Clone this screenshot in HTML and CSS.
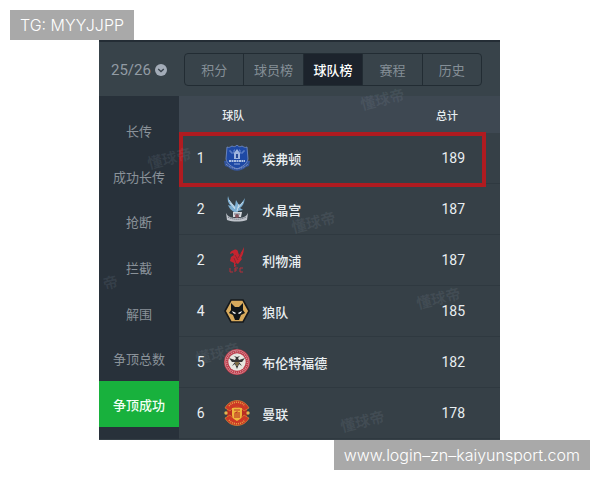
FILE: index.html
```html
<!DOCTYPE html>
<html lang="zh-CN">
<head>
<meta charset="utf-8">
<meta name="viewport" content="width=device-width, initial-scale=1">
<title>球队榜</title>
<link rel="stylesheet" href="styles.css">
</head>
<body>
<header class="banner"><span class="tag">TG: MYYJJPP</span></header>

<main class="panel">
  <div class="toolbar">
    <button class="season" type="button">25/26
      <svg class="season-icon" viewBox="0 0 12 12" aria-hidden="true"><circle cx="6" cy="6" r="6" fill="#a3acb8"/><path d="M3.2 4.9 6 7.5l2.8-2.6" fill="none" stroke="#39434c" stroke-width="1.3"/></svg>
    </button>
    <nav class="tabs">
      <button class="tab" type="button">积分</button>
      <button class="tab" type="button">球员榜</button>
      <button class="tab tab-active" type="button">球队榜</button>
      <button class="tab" type="button">赛程</button>
      <button class="tab" type="button">历史</button>
    </nav>
  </div>

  <div class="content">
    <nav class="sidebar">
      <button class="stat" type="button">长传</button>
      <button class="stat" type="button">成功长传</button>
      <button class="stat" type="button">抢断</button>
      <button class="stat" type="button">拦截</button>
      <button class="stat" type="button">解围</button>
      <button class="stat" type="button">争顶总数</button>
      <button class="stat stat-active" type="button">争顶成功</button>
    </nav>

    <table class="ranking">
      <thead>
        <tr><th class="rank"></th><th class="team" colspan="2">球队</th><th class="total">总计</th></tr>
      </thead>
      <tbody>
        <tr class="highlight">
          <td class="rank">1</td>
          <td class="crest"><svg viewBox="0 0 26 26" aria-hidden="true">
            <path d="M0 16c2-1 4 0 5 3 5 3 11 3 16 0 1-3 3-4 5-3l-1 5-3 1c-5 5-13 5-18 0l-3-1z" fill="#34569f"/>
            <path d="M3 2c2 1 3 0 5-1 2 1 3 1 5-1 2 2 3 2 5 1 2 1 3 2 5 1l1 12c-1 5-6 8-11 10C8 22 3 19 2 14z" fill="#1e49a5" stroke="#7892c9" stroke-width=".8"/>
            <path d="M5 6h2v2h3V5h1M15 5h1v3h3V6h2" fill="none" stroke="#7c9ad5" stroke-width=".8"/>
            <path d="M10 14V8l3-4 3 4v6z" fill="#9fb5de"/><path d="M12 13V9h2v4z" fill="#284b98"/>
            <path d="M5 16h16" stroke="#dce6f5" stroke-width="1.6" stroke-dasharray="2 .5"/>
            <path d="M10 19h6" stroke="#8ca6da"/>
            <path d="M2 19c6 6 16 6 22 0" fill="none" stroke="#8498ca" stroke-dasharray="1 .8"/>
          </svg></td>
          <td class="team">埃弗顿</td><td class="total">189</td>
        </tr>
        <tr>
          <td class="rank">2</td>
          <td class="crest"><svg viewBox="0 0 26 26" aria-hidden="true">
            <path d="M4 0c1 5 4 8 7 10l1-6 3 5c2-1 4-4 6-7-1 5-2 8-5 10l3 2-5 1-1 4-3-3C7 14 5 12 4 9l3 1C4 7 3 4 4 0z" fill="#7caed2"/>
            <path d="m5 4 6 8m-5-5 5 6m8-7-5 6m1-4-2 7" fill="none" stroke="#d8e5ee" stroke-width=".8"/>
            <path d="M9 16h9l-1 5H9z" fill="#d4d8dd"/><path d="M10 18h6" stroke="#6b7582"/>
            <path d="M2 17c2 4 5 5 11 5s9-1 11-5l-1 7c-6 2-14 2-20 0z" fill="#bec3ca"/>
            <path d="M4 21c5 3 13 3 18 0" fill="none" stroke="#575d6b" stroke-dasharray="1 1"/>
            <circle cx="13" cy="20" r="2" fill="#82535d"/>
          </svg></td>
          <td class="team">水晶宫</td><td class="total">187</td>
        </tr>
        <tr>
          <td class="rank">2</td>
          <td class="crest"><svg viewBox="0 0 26 26" aria-hidden="true">
            <path d="M10 3c2-1 4 0 4 2l1 3c2-2 3-4 5-8 0 4-1 8-3 11l1 1-4 5-2-1-1 2 2 1-3 1v-4l-4-2 1-4 3-2-1-2-3 1c0-2 1-3 4-4z" fill="#c6242f"/>
            <path d="m11 8 3 5m-4-2 2 5m5-10-3 5" stroke="#6e2933" stroke-width=".7"/>
            <path d="M6 21v4h3m2 0v-4h3m-3 2h2m6-2h-3v4h3" fill="none" stroke="#b82d38"/>
          </svg></td>
          <td class="team">利物浦</td><td class="total">187</td>
        </tr>
        <tr>
          <td class="rank">4</td>
          <td class="crest"><svg viewBox="0 0 26 26" aria-hidden="true">
            <path d="M7 2h12l6 11-6 11H7L1 13z" fill="#d8aa5c" stroke="#171a1d" stroke-width="1.6"/>
            <path d="m7 5 4 4h4l4-4v7l2 3-4 2-2 5h-4l-2-5-4-2 2-3z" fill="#111619"/>
            <path d="m8 13 4 2-1 1-2-1zm10 0-4 2 1 1 2-1z" fill="#fff"/>
          </svg></td>
          <td class="team">狼队</td><td class="total">185</td>
        </tr>
        <tr>
          <td class="rank">5</td>
          <td class="crest"><svg viewBox="0 0 26 26" aria-hidden="true">
            <circle cx="13" cy="13" r="13" fill="#bb3948"/><circle cx="13" cy="13" r="12" fill="none" stroke="#e1aab0" stroke-width=".6"/>
            <circle cx="13" cy="13" r="10.3" fill="none" stroke="#df9aa1" stroke-width="1.2" stroke-dasharray="1 1"/>
            <circle cx="13" cy="13" r="8.7" fill="#e7e5df"/>
            <path d="m5 9 6 2 1-2-2-2 3 1 3-1-2 2 1 2 6-2-3 4h-3l3 4-3-2-2 5-2-5-3 2 3-4H8z" fill="#343334"/>
            <path d="M11 14h4m-3 2h2" stroke="#c5a356"/>
          </svg></td>
          <td class="team">布伦特福德</td><td class="total">182</td>
        </tr>
        <tr>
          <td class="rank">6</td>
          <td class="crest"><svg viewBox="0 0 26 26" aria-hidden="true">
            <circle cx="13" cy="13" r="10.5" fill="#b92d22"/>
            <path d="M1 8c5-10 19-10 24 0l-5 3c-3-5-11-5-14 0zM1 18c5 10 19 10 24 0l-5-3c-3 5-11 5-14 0z" fill="#cc3826" stroke="#e29836" stroke-width=".6"/>
            <path d="M5 6c4-5 12-5 16 0M5 20c4 5 12 5 16 0" fill="none" stroke="#e5a443" stroke-width="1.5" stroke-dasharray="1 1"/>
            <circle cx="2" cy="13" r="1.7" fill="#e1b64e"/><circle cx="24" cy="13" r="1.7" fill="#e1b64e"/>
            <path d="M8 8h10v7c0 3-2 4-5 6-3-2-5-3-5-6z" fill="#efb63c"/>
            <path d="M10 10h6M11 18v-5l2-1v6m2-6v6" fill="none" stroke="#bc3926" stroke-width="1.2"/>
          </svg></td>
          <td class="team">曼联</td><td class="total">178</td>
        </tr>
      </tbody>
    </table>
  </div>

  <div class="marks" aria-hidden="true">
    <span class="mark mark-a">懂球帝</span>
    <span class="mark mark-b">懂球帝</span>
    <span class="mark mark-c">懂球帝</span>
    <span class="mark mark-d">懂球帝</span>
    <span class="mark mark-e">帝</span>
    <span class="mark mark-f">懂球帝</span>
    <span class="mark mark-g">懂球帝</span>
  </div>
</main>

<footer class="site"><span class="tag">www.login–zn–kaiyunsport.com</span></footer>
</body>
</html>
```
FILE: styles.css
```css
* {
  box-sizing: border-box;
}

body {
  margin: 0;
  background: #fff;
  font-family: Roboto, "Noto Sans CJK SC", sans-serif;
}

button {
  margin: 0;
  padding: 0;
  border: 0;
  background: none;
  color: inherit;
  font: inherit;
}

.banner,
.site {
  display: flex;
  padding: 0 10px;
}

.banner {
  padding-top: 10px;
}

.site {
  justify-content: flex-end;
  padding-bottom: 10px;
}

.tag {
  padding: 0 10px;
  background: #a9a9a9;
  color: #fff;
  font-family: Inter, "Liberation Sans", sans-serif;
  font-size: 16px;
  font-weight: 300;
  line-height: 30px;
}

.panel {
  position: relative;
  margin: 0 100px 0 99px;
  padding-bottom: 1px;
  overflow: hidden;
  border-top: 2px solid #242d35;
  background: #364047;
  color: #e9eef1;
}

.toolbar {
  display: grid;
  grid-template-columns: 73px 1fr;
  align-items: center;
  padding: 11px 18px 10px 12px;
  background: #38434a;
}

.season {
  display: flex;
  align-items: center;
  gap: 4px;
  color: #929ba4;
  font-size: 15px;
}

.season-icon {
  width: 12px;
  height: 12px;
}

.tabs {
  display: flex;
  height: 33px;
  border: 1px solid #222c33;
  border-radius: 4px;
  overflow: hidden;
}

.tab {
  flex: 1;
  color: #858f97;
  font-size: 13px;
}

.tab + .tab {
  border-left: 1px solid #222c33;
}

.tab-active {
  background: #1c232c;
  color: #fff;
  font-weight: 500;
}

.content {
  display: flex;
}

.sidebar {
  display: flex;
  flex-direction: column;
  flex: 0 0 20%;
  padding: 12px 0;
  background: #28313a;
}

.stat {
  flex: 1;
  color: #8a9299;
  font-size: 13px;
}

.stat-active {
  background: #18b13d;
  color: #f1fff4;
  font-weight: 500;
}

.ranking {
  flex: 1;
  border-collapse: separate;
  border-spacing: 0;
}

.ranking th {
  height: 37px;
  padding: 0;
  background: #3e4852;
  font-size: 11px;
  font-weight: 500;
}

.ranking td {
  height: 51px;
  padding: 0;
  border-bottom: 1px solid #2f3940;
  font-size: 14px;
}

.ranking .rank {
  width: 43px;
  text-align: center;
}

.ranking .crest {
  width: 40px;
  padding-left: 2px;
}

.crest svg {
  display: block;
  width: 26px;
  height: 26px;
}

.ranking .team {
  text-align: left;
}

.ranking td.team {
  font-size: 13px;
  font-weight: 500;
}

.ranking .total {
  text-align: right;
}

.ranking th.total {
  padding-right: 42px;
}

.ranking td.total {
  padding-right: 35px;
}

.highlight {
  position: relative;
}

.highlight .rank::after {
  content: "";
  position: absolute;
  inset: -1px 14px -3px 0;
  border: 4px solid #b01b20;
}

.marks {
  position: absolute;
  inset: 0;
  pointer-events: none;
}

.mark {
  position: absolute;
  color: rgba(150, 165, 178, 0.13);
  font-size: 15px;
  font-weight: 700;
  line-height: 20px;
  transform: rotate(-14deg);
}

.mark-a { left: 12%; top: 27%; }
.mark-b { left: 65%; top: 12%; }
.mark-c { left: 48%; top: 43%; }
.mark-d { left: 79%; top: 62%; }
.mark-e { left: 1%; top: 58%; }
.mark-f { left: 24%; top: 76%; }
.mark-g { left: 60%; top: 93%; }
```
